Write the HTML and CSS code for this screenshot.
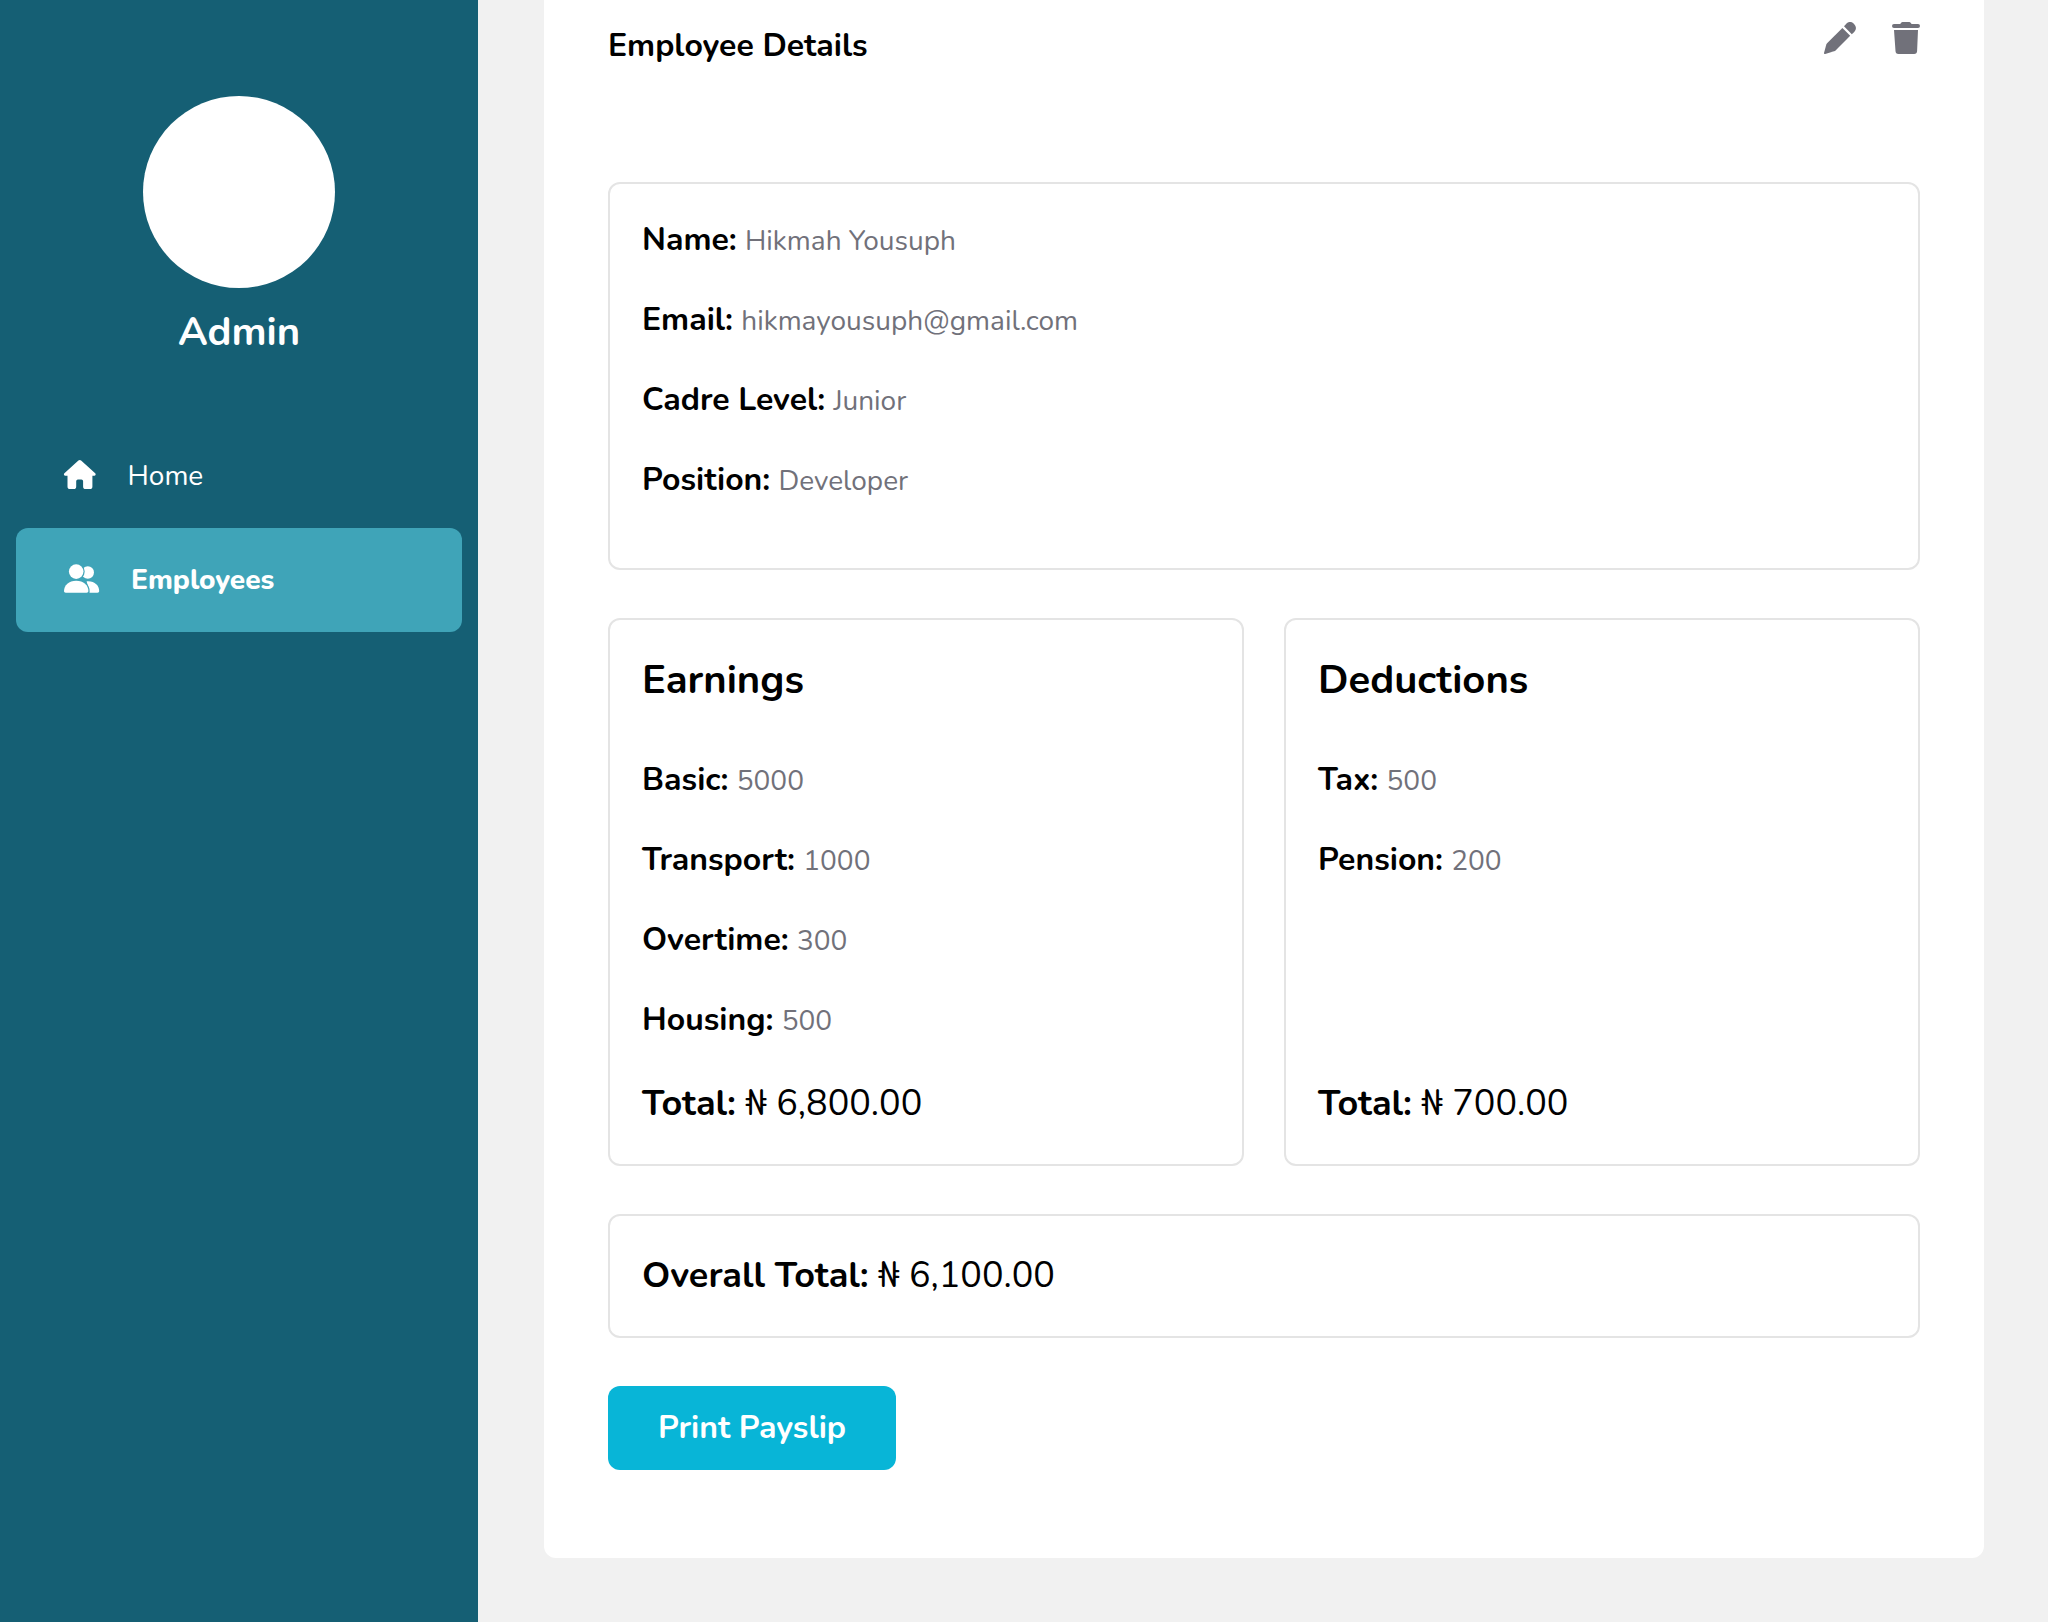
FILE: index.html
```html
<!DOCTYPE html>
<html lang="en">
<head>
<meta charset="utf-8">
<title>Employee Details</title>
<link rel="stylesheet" href="styles.css">
</head>
<body>
<div class="app">
  <aside class="sidebar">
    <div class="avatar"></div>
    <p class="role">Admin</p>
    <nav class="menu">
      <a class="menu-item home">
        <svg width="31.5" height="29" viewBox="0 0 31.5 29" fill="currentColor"><path d="M14.4.6a2 2 0 0 1 2.7 0L31.2 13.2c1 .9.4 2.5-.9 2.5h-1.900v10.700a2.600 2.600 0 0 1-2.600 2.600h-4.100a2.600 2.600 0 0 1-2.600-2.600v-5.200a1.700 1.700 0 0 0-1.700-1.700h-3.500a1.700 1.700 0 0 0-1.700 1.700v5.200A2.600 2.600 0 0 1 9.600 29H6.100a2.600 2.600 0 0 1-2.600-2.600V15.700H1.300c-1.300 0-1.900-1.600-.9-2.500z"/></svg>
        <span>Home</span>
      </a>
      <a class="menu-item employees active">
        <svg width="35" height="29" viewBox="0 0 35 29" fill="currentColor">
          <circle cx="23.8" cy="8.5" r="6.2"/>
          <path d="M22.6 17.2h1.700c6.500 0 10.900 4.400 10.900 9.900 0 .9-.7 1.600-1.700 1.600h-8z"/>
          <circle class="front" cx="12.2" cy="7.6" r="7.3"/>
          <path class="front" d="M1.7 28.7C.7 28.7 0 28 0 27.1c0-5.8 4.900-10.400 12.200-10.400s12.200 4.600 12.200 10.400c0 .9-.7 1.600-1.700 1.600z"/>
        </svg>
        <span>Employees</span>
      </a>
    </nav>
  </aside>

  <main class="card">
    <header class="card-head">
      <h1>Employee Details</h1>
      <div class="actions">
        <svg width="32" height="32" viewBox="0 0 32 32" fill="currentColor"><path d="M18.4 6 26.2 13.7 11.8 28.2c-.5.5-1 .8-1.7 1.1L1.2 32C.4 32.200 0 31.700 0 31L2.300 22.600c.2-.6.5-1.100 1-1.600z"/><path d="M20 4.300 22.100 2c2.300-2.500 5.600-2.500 7.900-.1 2.500 2.300 2.600 5.700.2 8L27.800 12.200z"/></svg>
        <svg width="28" height="32" viewBox="0 0 28 32" fill="currentColor"><path d="M2 2h6.200L9 .9C9.400.3 9.900 0 10.600 0h6.600c.7 0 1.200.3 1.600.9l.8 1.100H26a2 2 0 0 1 0 4H2a2 2 0 0 1 0-4z"/><path d="M2 8h24l-.9 21.100A3 3 0 0 1 22.100 32H6.500a3 3 0 0 1-3-2.900z"/></svg>
      </div>
    </header>

    <section class="panel">
      <p class="row"><b>Name:</b> <span>Hikmah Yousuph</span></p>
      <p class="row"><b>Email:</b> <span>hikmayousuph@gmail.com</span></p>
      <p class="row"><b>Cadre Level:</b> <span>Junior</span></p>
      <p class="row"><b>Position:</b> <span>Developer</span></p>
    </section>

    <div class="columns">
      <section class="panel">
        <h2>Earnings</h2>
        <p class="row"><b>Basic:</b> <span>5000</span></p>
        <p class="row"><b>Transport:</b> <span>1000</span></p>
        <p class="row"><b>Overtime:</b> <span>300</span></p>
        <p class="row"><b>Housing:</b> <span>500</span></p>
        <p class="total"><b>Total:</b> ₦ 6,800.00</p>
      </section>
      <section class="panel">
        <h2>Deductions</h2>
        <p class="row"><b>Tax:</b> <span>500</span></p>
        <p class="row"><b>Pension:</b> <span>200</span></p>
        <p class="total"><b>Total:</b> ₦ 700.00</p>
      </section>
    </div>

    <section class="panel">
      <p class="total"><b>Overall Total:</b> ₦ 6,100.00</p>
    </section>

    <button class="print" type="button">Print Payslip</button>
  </main>
</div>
</body>
</html>
```
FILE: styles.css
```css
* { box-sizing: border-box; margin: 0; padding: 0; }

body {
  background: #f1f1f1;
  color: #000;
  font-family: Nunito, Lato, "Open Sans", sans-serif;
}

svg { display: block; flex: none; overflow: visible; }

.app { display: flex; min-height: 1622px; }

/* Sidebar */
.sidebar {
  width: 478px;
  padding: 96px 16px 0;
  background: #155f74;
  color: #fff;
}
.avatar {
  width: 192px;
  height: 192px;
  margin: 0 auto;
  border-radius: 50%;
  background: #fff;
}
.role {
  margin-top: 16px;
  font-size: 40px;
  font-weight: 700;
  line-height: 56px;
  text-align: center;
}
.menu { margin-top: 64px; }
.menu-item {
  display: flex;
  align-items: center;
  gap: 32px;
  height: 104px;
  padding: 0 48px;
  border-radius: 12px;
  font-size: 28px;
  line-height: 40px;
}
.menu-item svg { margin-bottom: 3px; }
.menu-item.active { background: #3fa4b8; font-weight: 800; }
.front { stroke: #3fa4b8; stroke-width: 2.4; paint-order: stroke; }

/* Main card */
.card {
  display: flex;
  flex-direction: column;
  gap: 48px;
  width: 1440px;
  height: 1558px;
  margin-left: 66px;
  padding: 22px 64px 88px;
  border-radius: 0 0 12px 12px;
  background: #fff;
}
.card-head { display: flex; justify-content: space-between; height: 112px; }
h1 { font-size: 32px; line-height: 48px; }
.actions { display: flex; gap: 36px; color: #71717a; }

.panel {
  display: flex;
  flex-direction: column;
  padding: 32px;
  border: 2px solid #e4e4e4;
  border-radius: 12px;
}
.columns { display: grid; grid-template-columns: 1fr 1fr; gap: 40px; }

h2 { height: 60px; margin-bottom: 44px; font-size: 40px; line-height: 56px; }

.row { height: 48px; margin-bottom: 32px; font-size: 32px; line-height: 48px; }
.row span { color: #71717a; font-size: 28px; line-height: 40px; }

.total { height: 56px; margin-top: auto; font-size: 36px; line-height: 56px; }

.print {
  align-self: flex-start;
  width: 288px;
  height: 84px;
  border: 0;
  border-radius: 12px;
  background: #08b5d7;
  color: #fff;
  font: 700 32px/84px Nunito, Lato, "Open Sans", sans-serif;
}
```
